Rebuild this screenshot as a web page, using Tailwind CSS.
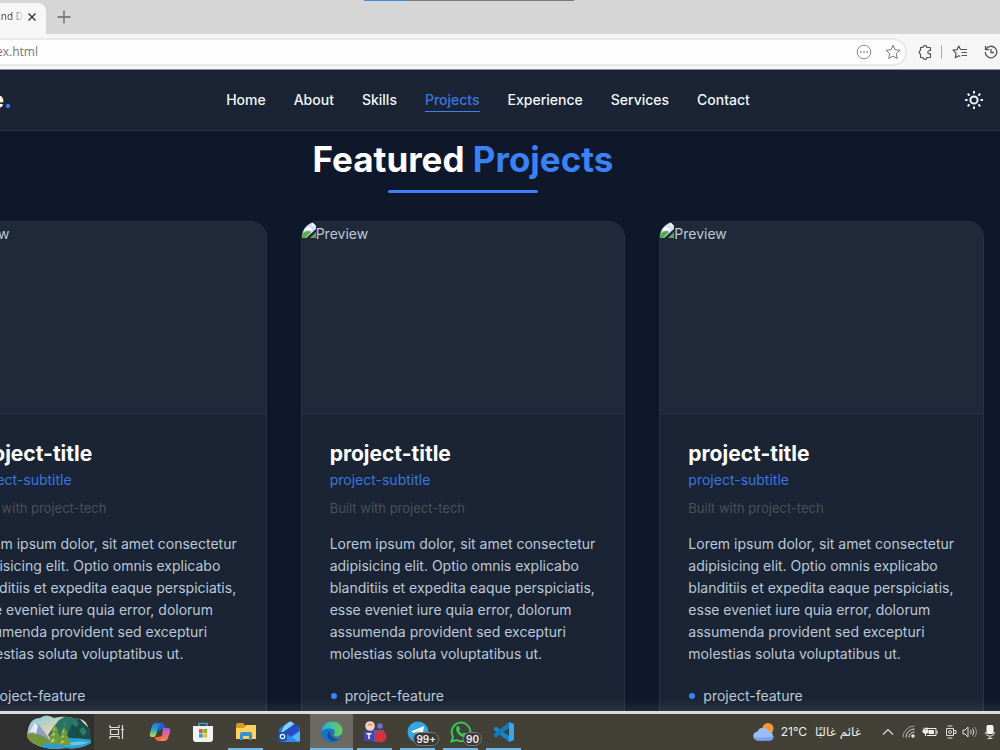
<!DOCTYPE html>
<html lang="en">
<head>
    <meta charset="UTF-8">
    <meta name="viewport" content="width=device-width, initial-scale=1.0">
    <title>Featured Projects</title>
    <script src="https://cdn.jsdelivr.net/npm/@tailwindcss/browser@4"></script>
</head>
<body class="h-screen flex flex-col overflow-hidden bg-[#0f172a] font-['Inter',sans-serif]">

    <!-- Tab strip -->
    <div class="relative flex h-[34px] shrink-0 bg-[#d6d6d6] font-['Noto_Sans',sans-serif]">
        <div class="absolute top-0 left-[364px] flex h-px w-[210px] bg-[#77797c]"><span class="w-[42px] bg-[#3c8fd6]"></span></div>
        <div class="mt-[3px] flex w-[46px] items-center justify-end gap-1 rounded-tr-lg bg-[#f7f7f7] pr-[9px] pb-1 text-[10px]">
            <span class="whitespace-nowrap bg-linear-to-r from-[#444] from-50% to-[#e7e7e7] bg-clip-text text-transparent">nd D</span>
            <button aria-label="Close tab">
                <svg class="size-2.5" viewBox="0 0 10 10" fill="none" stroke="#333" stroke-width="1.4"><path d="M1.5 1.5l7 7M8.5 1.5l-7 7"/></svg>
            </button>
        </div>
        <button aria-label="New tab" class="ml-[11px]">
            <svg class="size-3.5" viewBox="0 0 14 14" fill="none" stroke="#666" stroke-width="1.3"><path d="M7 .5v13M.5 7h13"/></svg>
        </button>
    </div>

    <!-- Address bar -->
    <div class="flex h-9 shrink-0 items-center border-b border-[#8b9098] bg-[#f6f6f6] text-[#555]">
        <div class="flex h-7 flex-1 items-center rounded-r-full border-2 border-l-0 border-[#e9e9e9] bg-[#fdfdfd] pr-1">
            <input type="text" aria-label="Address" value="ex.html" class="-ml-1 min-w-0 flex-1 font-['Open_Sans',sans-serif] text-xs text-[#777] outline-none">
            <button aria-label="More" class="mr-[13px]">
                <svg class="size-4" viewBox="0 0 16 16" fill="none" stroke="#888"><circle cx="8" cy="8" r="6.8"/><path d="M4 8h1.6M7.2 8h1.6M10.400 8H12" stroke-width="1.6"/></svg>
            </button>
            <button aria-label="Favorite">
                <svg class="size-4" viewBox="0 0 16 16" fill="none" stroke="#777" stroke-linejoin="round"><path d="M8 1.300l2 4.400 4.900.600-3.600 3.300.900 4.900L8 12.100l-4.200 2.400.900-4.900L1.100 6.300 6 5.700z"/></svg>
            </button>
        </div>
        <div class="flex w-[93px] shrink-0 items-center overflow-hidden pl-2.5">
            <button aria-label="Extensions" class="shrink-0">
                <svg class="size-4" viewBox="0 0 16 16" fill="none" stroke="#555" stroke-width="1.200" stroke-linejoin="round"><path d="M3.500 3.500h2.500a1.900 1.900 0 0 1 3.800 0h3.700v3h-1a1.700 1.700 0 0 0 0 3.400h1v3.600H9.800a1.900 1.900 0 0 1-3.800 0H3.500V10a1.800 1.800 0 0 1 0-3.500z"/></svg>
            </button>
            <span class="ml-2 h-3.5 w-px shrink-0 bg-[#aaa]"></span>
            <button aria-label="Favorites list" class="ml-2.5 shrink-0">
                <svg class="size-4" viewBox="0 0 16 16" fill="none" stroke="#555" stroke-width="1.200" stroke-linejoin="round"><path d="M8.500 5.500L6.800 2 5 5.700l-4 .500 3 3L3.300 13.700l3.500-2 1.500.8M8.500 5.500H15M9.500 8.500H15M9.500 11.500H15"/></svg>
            </button>
            <button aria-label="History" class="ml-4 shrink-0">
                <svg class="size-3.5" viewBox="0 0 14 14" fill="none" stroke="#555" stroke-width="1.300"><path d="M1.800 4.500A5.800 5.800 0 1 1 1.200 7M1.500 1v3.700h3.700M7 4v3.500h3"/></svg>
            </button>
        </div>
    </div>

    <!-- Page content, scrolled a little to the right -->
    <div class="relative -ml-[58px] flex min-h-0 flex-1 flex-col overflow-hidden">
        <header class="flex h-[61px] shrink-0 items-center justify-between border-b border-[#263446] bg-[#1a2434] pr-4">
            <a href="#" class="w-[70px] text-right text-2xl font-bold text-white">Code<span class="text-[#3b82f6]">.</span></a>
            <nav class="flex gap-7 text-sm font-medium text-[#f4f7fb]">
                <a href="#">Home</a>
                <a href="#">About</a>
                <a href="#">Skills</a>
                <a href="#" class="relative text-[#3b76e0] after:absolute after:inset-x-0 after:-bottom-0.5 after:h-px after:bg-[#3b82f6]">Projects</a>
                <a href="#">Experience</a>
                <a href="#">Services</a>
                <a href="#">Contact</a>
            </nav>
            <button aria-label="Toggle theme">
                <svg class="size-5" viewBox="0 0 20 20" fill="none" stroke="#f1f5f9" stroke-width="2" stroke-linecap="round"><circle cx="10" cy="10" r="3.600"/><path d="M10 1.800v1M10 17.200v1M1.800 10h1M17.200 10h1M4.300 4.300l.7.7M15 15l.7.7M15.700 4.300l-.7.7M5 15l-.7.7"/></svg>
            </button>
        </header>

        <main class="flex min-h-0 flex-1 flex-col pr-4">
            <div class="mx-auto mt-2 flex flex-col items-center">
                <h1 class="text-[35px] leading-10 font-bold text-white">Featured <span class="text-[#3b82f6]">Projects</span></h1>
                <span class="mt-[11px] h-[3px] w-1/2 rounded-full bg-[#3b82f6]"></span>
            </div>
            <div id="projects" class="mt-7 grid shrink-0 grid-cols-3 gap-[34px]"></div>
        </main>
        <div class="absolute inset-x-0 bottom-0 h-3 bg-linear-to-b from-white/0 to-white/7"></div>
    </div>

    <!-- Taskbar -->
    <footer class="flex h-[39px] shrink-0 border-t-3 border-[#dcdcdf] bg-[#434137] text-[#eee]">
        <div class="flex w-[94px] shrink-0 items-center justify-end bg-[#303030] pr-0.5">
            <svg class="h-[34px] w-[66px]" viewBox="0 0 66 34">
                <defs>
                    <linearGradient id="sky" x1="0" y1="0" x2="1" y2="1"><stop stop-color="#72c6df"/><stop offset=".5" stop-color="#f4d9ae"/><stop offset="1" stop-color="#3d9b98"/></linearGradient>
                    <clipPath id="scene"><path d="M2 15Q4 3 14 3Q20-2 28 3Q41 0 49 4Q60 2 63 15L65 28Q54 35 40 33Q20 36 7 28Q-1 24 2 15z"/></clipPath>
                </defs>
                <g clip-path="url(#scene)">
                    <path fill="url(#sky)" d="M0 0h66v34H0z"/>
                    <path fill="#929dc4" d="M0 22L9 7l4 3 11 14z"/><path fill="#e6eaf5" d="M3 18L9 7l3 4-2 8-3-2z"/>
                    <path fill="#2b7164" d="M22 20q4-6 7-10l4-5 7-4 14 3 12 14v12H30z"/>
                    <path fill="#174f4e" d="M40 24l5-13 8-7 13 12v12z"/>
                    <path fill="#347a6b" d="M36 8l3-3 3 4-3 4zM46 7l4-2 3 4-4 3zM53 15l4-3 4 5-4 4z"/>
                    <path fill="#72963d" d="M0 19q15-3 27 9l-8 6H0z"/>
                    <path fill="#2ba0cf" d="M20 28q17-8 46-3v9H12z"/>
                    <path fill="#65c8e5" d="M36 30q13-5 27-3-9 5-27 3z"/>
                    <path fill="#6f9a3e" d="M29 10l-4 6h2l-4 6h2l-3 7h14l-3-7h2l-4-6h2zM38 12l-4 7h2l-3 5h2l-2 6h12l-3-6h2l-4-5h2z"/>
                    <path fill="#c5c75a" d="M29 12l-2 4 2-1zM28 17l-3 4 4-1zM27 23l-3 5 5-2zM38 14l-2 4 2-1zM37 19l-2 4 3-1zM36 25l-2 4 5-2z"/>
                </g>
            </svg>
        </div>
        <div class="flex shrink-0 pl-px">
            <button aria-label="Task view" class="grid w-[43px] place-items-center">
                <svg class="size-4" viewBox="0 0 16 16" fill="none" stroke="#ddd" stroke-width="1.200"><path d="M1 1v2.500h9V1M1.500 5.500h8v5h-8zM1 15v-2.500h9V15M13.500 1v14M12 5.500h3"/></svg>
            </button>
            <button aria-label="Copilot" class="grid w-[43px] place-items-center">
                <svg class="size-[22px]" viewBox="0 0 22 22">
                    <defs>
                        <linearGradient id="cpA" x2="0" y2="1"><stop stop-color="#2870df"/><stop offset=".5" stop-color="#26a9c3"/><stop offset="1" stop-color="#d4d83d"/></linearGradient>
                        <linearGradient id="cpB" x2="0" y2="1"><stop stop-color="#a05ce5"/><stop offset=".5" stop-color="#ed638e"/><stop offset="1" stop-color="#f58a45"/></linearGradient>
                    </defs>
                    <path fill="#2460cc" d="M8 2h5q2 0 3 4l1 2h-4q-2 0-3 3z"/>
                    <path fill="url(#cpA)" d="M6 2h6q-2 1-3 5l-2 7q-1 2-3 2H3q-3 0-2-4l2-7q1-3 3-3z"/>
                    <path fill="#ef693f" d="M5 16h4l4-1-1 5H9q-2 0-3-3z"/>
                    <path fill="url(#cpB)" d="M14 7h5q3 0 2 4l-2 6q-1 3-4 3h-5q2-1 3-5l1-6q0-2 0-2z"/>
                </svg>
            </button>
            <button aria-label="Store" class="grid w-[43px] place-items-center">
                <svg class="size-[22px]" viewBox="0 0 22 22"><path d="M7 6V2.500h8V6" fill="none" stroke="#35a3d5" stroke-width="1.500"/><path d="M1 5h20v13q0 3-3 3H4q-3 0-3-3z" fill="#f0f1f2"/><path fill="#e9552e" d="M7 8h3.700v4H7z"/><path fill="#79b82b" d="M11.300 8H15v4h-3.700z"/><path fill="#25a2e5" d="M7 12.600h3.700v4H7z"/><path fill="#f8b72b" d="M11.300 12.600H15v4h-3.700z"/></svg>
            </button>
            <button aria-label="File Explorer" class="relative grid w-[43px] place-items-center after:absolute after:inset-x-1 after:bottom-0 after:h-0.5 after:bg-[#72b7ea]">
                <svg class="size-[22px]" viewBox="0 0 22 22"><path fill="#d99a22" d="M1 4q0-2 2-2h5l2 2v4H1z"/><path fill="#f9d261" d="M1 7h8l2-3h10v14H1z"/><path fill="#3c8fd2" d="M5 19v-6q0-2 2-2h8q2 0 2 2v6h-3v-4H8v4z"/></svg>
            </button>
            <button aria-label="Outlook" class="grid w-[43px] place-items-center">
                <svg class="size-[22px]" viewBox="0 0 22 22"><path fill="#2470dc" d="M1 9q0-1 1-2l8-6q2-1 4 0l7 5q1 1 1 2v11q0 2-2 2H4q-3 0-3-3z"/><path fill="#83d0f7" d="M6 5l5-4q2-1 3 0l2 2-10 8H3z"/><path fill="#284cc0" d="M5 11L17 3l4 3v4L9 17z"/><path fill="#52b5fa" d="M7 21l15-11v9q0 2-2 2z"/><path fill="#318ae9" d="M9 13l12 8H6z"/><rect y="11" width="9" height="9" rx="2" fill="#1653aa"/><circle cx="4.500" cy="15.500" r="2.200" fill="none" stroke="#fff" stroke-width="1.200"/></svg>
            </button>
            <button aria-label="Edge" class="relative grid w-[43px] place-items-center bg-[#6a6962] after:absolute after:inset-x-0 after:bottom-0 after:h-0.5 after:bg-[#72b7ea]">
                <svg class="size-[22px]" viewBox="0 0 22 22">
                    <defs><linearGradient id="edge"><stop stop-color="#26a9dc"/><stop offset="1" stop-color="#68cf57"/></linearGradient></defs>
                    <circle cx="11" cy="11" r="10.500" fill="#1872c4"/>
                    <path fill="url(#edge)" d="M.5 11C1 4 5 .5 11 .5c6 0 10.500 4 10.500 9 0 4-3 6-6 6-2 0-3.500-1-2.500-2 2-3 0-6-4-6-4 0-7 1-8.500 3.500z"/>
                    <path fill="#124f93" d="M8 10q-3 4 0 8 4 4 11-.5-4 1-7-1-3-2-4-6.500z"/>
                    <path fill="#6a6962" d="M12 11c2 1 0 3 1 4 2 2 6 1.500 8.500 0l-1.500 2.500q-4 1.500-7-.5-3-3-1-6z"/>
                </svg>
            </button>
            <button aria-label="Teams" class="relative grid w-[43px] place-items-center after:absolute after:inset-x-1 after:bottom-0 after:h-0.5 after:bg-[#72b7ea]">
                <svg class="h-[22px] w-6" viewBox="0 0 24 22"><circle cx="17" cy="5" r="2.800" fill="#6870d6"/><path fill="#555bc4" d="M7 9h14v8q-3 5-9 4l-5-4z"/><circle cx="7" cy="5" r="4.800" fill="#f3d3c4"/><path fill="#c98d84" d="M4.500 5q0-2.500 2.500-2.500T9.500 5Q7 3.500 4.500 5z"/><rect x="1" y="10" width="10" height="10" rx="1" fill="#4548aa"/><path d="M3.500 12.700h5M6 12.700V18" stroke="#fff" stroke-width="1.400"/><circle cx="17.500" cy="15.500" r="6" fill="#d23439"/></svg>
            </button>
            <button aria-label="Telegram" class="relative grid w-[43px] place-items-center after:absolute after:inset-x-1 after:bottom-0 after:h-0.5 after:bg-[#72b7ea]">
                <svg class="size-[22px]" viewBox="0 0 22 22"><circle cx="11" cy="11" r="10.500" fill="#37a5e1"/><path fill="#fff" d="M4 10.500L17 5l-2 12-4-3-2 2v-4l5-4-7 4z"/></svg>
                <span class="absolute right-0 bottom-1 rounded-full border border-[#777] bg-[#39393a] px-0.5 text-[10px] leading-3 font-semibold">99+</span>
            </button>
            <button aria-label="WhatsApp" class="relative grid w-[43px] place-items-center after:absolute after:inset-x-1 after:bottom-0 after:h-0.5 after:bg-[#72b7ea]">
                <svg class="size-[22px]" viewBox="0 0 22 22"><path fill="none" stroke="#35c85a" stroke-width="2" d="M1.500 20.500L3 15.500a9.300 9.300 0 1 1 3.500 3.500z"/><path fill="#35c85a" d="M6.500 6q1-2 2.500-.5l1 2.500-1 1.500q1.500 2.500 3.500 3.500l1.500-1.500 2.500 1.200q.5 2-1.500 3-3 1-6-2-4-4-2.500-7.700z"/></svg>
                <span class="absolute right-0 bottom-1 rounded-full border border-[#777] bg-[#39393a] px-0.5 text-[10px] leading-3 font-semibold">90</span>
            </button>
            <button aria-label="VS Code" class="relative grid w-[43px] place-items-center after:absolute after:inset-x-1 after:bottom-0 after:h-0.5 after:bg-[#72b7ea]">
                <svg class="size-[22px]" viewBox="0 0 22 22"><path fill="#1686cd" d="M1 7l2-1.500L16 15v6L1 9z"/><path fill="#1479ba" d="M1 15l2 1.500L16 7V1L1 13z"/><path fill="#35a9ee" d="M16 1l5 2v16l-5 2z"/></svg>
            </button>
        </div>

        <div class="ml-auto flex shrink-0 items-center">
            <svg class="h-5 w-[22px]" viewBox="0 0 22 20"><circle cx="15" cy="6.500" r="5.500" fill="#f39a32"/><path fill="#9dbcf7" d="M5 18.500a4.500 4.500 0 0 1-.5-9 6 6 0 0 1 11-.5 5 5 0 0 1 1.500 9.500z"/><path fill="#79a2ed" d="M1 15q10 2 20-1-1 4.500-4 4.500H5q-3 0-4-3.500z"/></svg>
            <span class="ml-1.5 text-xs">21°C</span>
            <span dir="rtl" lang="ar" class="ml-2 whitespace-nowrap font-['DejaVu_Sans',sans-serif] text-xs">غائم غالبًا</span>
            <svg class="ml-[21px] h-3 w-3" viewBox="0 0 12 12" fill="none" stroke="#ddd" stroke-width="1.200"><path d="M1 8.500l5-5 5 5"/></svg>
            <svg class="ml-2 size-3.5" viewBox="0 0 14 14" fill="none" stroke="#ddd"><path d="M1 12.500A11.500 11.500 0 0 1 12.500 1" opacity=".6"/><path d="M4 12.500A8.500 8.500 0 0 1 12.500 4M7 12.500A5.500 5.500 0 0 1 12.500 7"/><circle cx="11" cy="11" r="1.300" fill="#ddd"/></svg>
            <svg class="ml-1.5 h-3 w-4" viewBox="0 0 16 12" fill="none" stroke="#eee"><path d="M3 2.500h11v7H5M15.200 5v2.500"/><path fill="#eee" d="M7 4.500h4.500v3H7zM1 4h5v2.500q-2.500 2-5 0zM2 1.500V4M5 1.500V4M3.500 7.500V10"/></svg>
            <svg class="ml-1.5 size-3.5" viewBox="0 0 14 14" fill="none" stroke="#ddd"><path d="M2.500 3.500h7v7h-7zM9.500 5.500h2.500v3H9.500M3.500 1h5M3.500 13h5"/><circle cx="6" cy="7" r="1.500"/></svg>
            <svg class="ml-1 h-3.5 w-4" viewBox="0 0 16 14" fill="none" stroke="#ddd"><path d="M1 5h2l3-3v10L3 9H1zM8.500 5q1.500 2 0 4M10.500 3.500q3 3.500 0 7"/><path d="M12.500 2q4 5 0 10" opacity=".5"/></svg>
            <svg class="mr-1 ml-1.5 h-4 w-3" viewBox="0 0 12 16"><rect x="2.500" y="1" width="7" height="9" rx="1.500" fill="#f5f5f5"/><path d="M1.500 8q0 4 4.500 4t4.500-4M6 12v3M3.500 14.500h5" fill="none" stroke="#ddd"/></svg>
        </div>
    </footer>

    <!-- One project card -->
    <template id="cardTemplate">
        <article class="h-[560px] overflow-hidden rounded-2xl border border-[#263347] bg-[#1a2434] text-sm text-[#bcc8d8]">
            <div class="flex h-48 items-start border-b border-[#263347] bg-[#1f293a]">
                <svg class="h-4 w-3.5 shrink-0" viewBox="0 0 14 16"><path fill="#d3e0f5" d="M0 0h10l4 4v3L4 16H0z"/><path fill="#fff" d="M2 8q0-2 2-2 2-2 4 0 2 0 2 2z"/><path fill="#5aab45" d="M0 16v-4q5-5 9-2l-6 6zM8 16l6-6v6z"/><path fill="#f5f7fa" d="M10 0v4h4z"/></svg>
                <span class="leading-6">Preview</span>
            </div>
            <div class="p-7">
                <h2 class="text-[21px] leading-6 font-bold text-white">project-title</h2>
                <p class="mt-1 text-[#3b76e0]">project-subtitle</p>
                <p class="mt-2 text-[13px] leading-5 text-[#4b5058]">Built with project-tech</p>
                <p class="mt-[15px] leading-[22px]">Lorem ipsum dolor, sit amet consectetur adipisicing elit. Optio omnis explicabo blanditiis et expedita eaque perspiciatis, esse eveniet iure quia error, dolorum assumenda provident sed excepturi molestias soluta voluptatibus ut.</p>
                <ul class="mt-5">
                    <li class="flex items-center gap-2 pl-px leading-[22px]"><span class="size-1.5 rounded-full bg-[#3b82f6]"></span>project-feature</li>
                </ul>
            </div>
        </article>
    </template>

    <script>
        const projects = document.getElementById('projects');
        const cardTemplate = document.getElementById('cardTemplate');

        for (let i = 0; i < 3; i++) {
            projects.appendChild(cardTemplate.content.cloneNode(true));
        }
    </script>
</body>
</html>
